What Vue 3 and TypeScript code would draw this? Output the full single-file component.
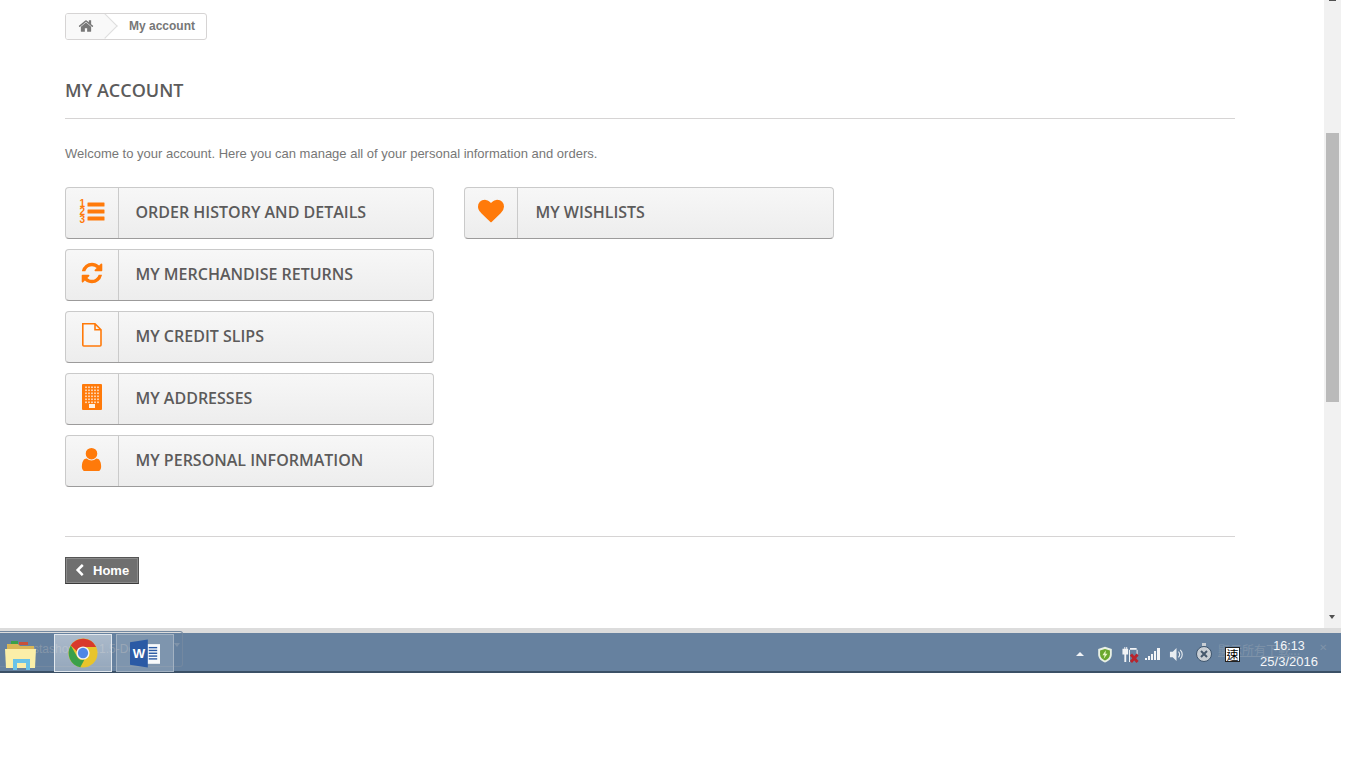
<script setup lang="ts">
interface Item { label: string; icon: string }
const left: Item[] = [
  { label: 'ORDER HISTORY AND DETAILS', icon: 'list' },
  { label: 'MY MERCHANDISE RETURNS', icon: 'refresh' },
  { label: 'MY CREDIT SLIPS', icon: 'file' },
  { label: 'MY ADDRESSES', icon: 'building' },
  { label: 'MY PERSONAL INFORMATION', icon: 'user' },
]
const right: Item[] = [{ label: 'MY WISHLISTS', icon: 'heart' }]
const columns = [left, right]
</script>

<template>
  <div class="screen">
    <div class="browser">
      <main class="page">
        <nav class="crumb">
          <span class="crumb-home">
            <i class="crumb-arrow"></i>
            <svg class="home-icon" viewBox="0 0 1792 1792"><path fill="#777" d="M1472 992v480q0 26-19 45t-45 19h-384v-384h-256v384h-384q-26 0-45-19t-19-45v-480q0-1 .5-3t.5-3l575-474 575 474q1 2 1 6zm223-69l-62 74q-8 9-21 11h-3q-13 0-21-7l-692-577-692 577q-12 8-24 7-13-2-21-11l-62-74q-8-10-7-23.500t11-21.500l719-599q32-26 76-26t76 26l244 204v-195q0-14 9-23t23-9h192q14 0 23 9t9 23v408l219 182q10 8 11 21.500t-7 23.500z"/></svg>
          </span>
          <span class="crumb-text">My account</span>
        </nav>
        <h1 class="title">MY ACCOUNT</h1>
        <p class="intro">Welcome to your account. Here you can manage all of your personal information and orders.</p>
        <div class="cols">
          <ul v-for="(col, c) in columns" :key="c" class="col">
            <li v-for="item in col" :key="item.label" class="link">
              <span class="link-icon">
                <svg v-if="item.icon === 'list'" class="ic" width="26" height="26" viewBox="0 0 26 26">
                  <text x="0.5" y="8.500" class="num">1</text>
                  <text x="0.5" y="16.500" class="num">2</text>
                  <text x="0.5" y="25" class="num">3</text>
                  <rect x="8.500" y="4.500" width="17" height="4" rx="0.5"/>
                  <rect x="8.500" y="11.500" width="17" height="4" rx="0.5"/>
                  <rect x="8.500" y="18.500" width="17" height="4" rx="0.5"/>
                </svg>
                <svg v-else-if="item.icon === 'refresh'" class="ic" width="24" height="24" viewBox="0 0 1792 1792"><path d="M1639 1056q0 5-1 7-64 268-268 434.500t-478 166.500q-146 0-282.500-55t-243.500-157l-129 129q-19 19-45 19t-45-19-19-45v-448q0-26 19-45t45-19h448q26 0 45 19t19 45-19 45l-137 137q71 66 161 102t187 36q134 0 250-65t186-179q11-17 53-117 8-23 30-23h192q13 0 22.500 9.500t9.500 22.500zm25-800v448q0 26-19 45t-45 19h-448q-26 0-45-19t-19-45 19-45l138-138q-148-137-349-137-134 0-250 65t-186 179q-11 17-53 117-8 23-30 23h-199q-13 0-22.500-9.500t-9.500-22.500v-7q65-268 270-434.500t480-166.500q146 0 284 55.500t245 156.500l130-129q19-19 45-19t45 19 19 45z"/></svg>
                <svg v-else-if="item.icon === 'file'" class="ic" width="22" height="26" viewBox="0 0 22 26"><path fill="#fff" fill-opacity="0.35" stroke="#ff7a0a" stroke-width="1.6" d="M1.8 1.8h12.2l6 6v15.2a1 1 0 0 1-1 1H2.8a1 1 0 0 1-1-1zM14 1.800v6h6"/></svg>
                <svg v-else-if="item.icon === 'building'" class="ic" width="20" height="26" viewBox="0 0 20 26">
                  <path d="M1 0h18a1 1 0 0 1 1 1v24a1 1 0 0 1-1 1H1a1 1 0 0 1-1-1V1a1 1 0 0 1 1-1z"/>
                  <g fill="#ffcfa6">
                    <template v-for="r in 6" :key="r">
                      <rect v-for="k in 5" :key="k" :x="3 + (k - 1) * 3" :y="-0.500 + r * 3" width="2" height="1.600"/>
                    </template>
                  </g>
                  <rect x="7" y="20" width="6" height="4" fill="#fff0e2"/>
                </svg>
                <svg v-else-if="item.icon === 'user'" class="ic" width="27" height="27" viewBox="0 0 1792 1792"><path d="M1536 1399q0 109-62.500 187t-150.500 78h-854q-88 0-150.500-78t-62.500-187q0-85 8.500-160.500t31.500-152 58.500-131 94-89 134.500-34.500q131 128 313 128t313-128q76 0 134.500 34.500t94 89 58.500 131 31.500 152 8.500 160.500zm-256-887q0 159-112.500 271.500t-271.500 112.500-271.500-112.500-112.500-271.500 112.500-271.500 271.500-112.500 271.500 112.500 112.500 271.500z"/></svg>
                <svg v-else class="ic" width="26" height="26" viewBox="0 0 1792 1792"><path d="M896 1664q-26 0-44-18l-624-602q-10-8-27.500-26t-55.500-65.500-68-97.500-53.500-121-23.500-138q0-220 127-344t351-124q62 0 126.500 21.500t120 58 95.500 68.500 76 68q36-36 76-68t95.500-68.500 120-58 126.500-21.500q224 0 351 124t127 344q0 221-229 450l-623 600q-18 18-44 18z"/></svg>
              </span>
              <span class="link-text">{{ item.label }}</span>
            </li>
          </ul>
        </div>
        <footer class="foot">
          <span class="home-btn">
            <svg width="13" height="13" viewBox="0 0 1792 1792"><path fill="#fff" d="M1427 301l-531 531 531 531q19 19 19 45t-19 45l-166 166q-19 19-45 19t-45-19l-742-742q-19-19-19-45t19-45l742-742q19-19 45-19t45 19l166 166q19 19 19 45t-19 45z"/></svg>
            Home
          </span>
        </footer>
      </main>
      <aside class="scrollbar">
        <i class="arrow-up"></i>
        <i class="thumb"></i>
        <i class="arrow-down"></i>
      </aside>
    </div>
    <div class="strip"></div>
    <div class="taskbar">
      <span class="ghost-left">stashop-1.6.1.5-De...</span>
      <i class="ghost-box"></i>
      <i class="ghost-caret"></i>
      <div class="apps">
        <span class="app app-plain">
          <svg width="34" height="30" viewBox="0 0 34 30">
            <path fill="#d9b656" d="M3 4h11l2 2h14v20H3z"/>
            <rect x="7" y="1" width="7" height="3" fill="#3aa04a"/>
            <rect x="15" y="2" width="9" height="3" fill="#c8503a"/>
            <path fill="#fbeea8" d="M1 9h31l-1 19H2z"/>
            <path fill="#69c3e8" d="M9 19h17v11h-4v-7H13v7H9z"/>
          </svg>
        </span>
        <span class="app app-active">
          <svg width="30" height="30" viewBox="0 0 32 32">
            <circle cx="16" cy="16" r="15.500" fill="#e8c42c"/>
            <path fill="#d8392c" d="M3 8A15.500 15.500 0 0 1 30 9.500H16a6.800 6.800 0 0 0-6.500 4.500z"/>
            <path fill="#3aa04a" d="M3 8l6.800 12a6.800 6.800 0 0 0 7.800 3l-4.500 8.300A15.500 15.500 0 0 1 3 8z"/>
            <circle cx="16" cy="16" r="7" fill="#f1f3f6"/>
            <circle cx="16" cy="16" r="5.500" fill="#4e86e6"/>
          </svg>
        </span>
        <span class="app app-open">
          <svg width="30" height="31" viewBox="0 0 32 32">
            <rect x="12" y="6" width="20" height="21" fill="#f7f9fb"/>
            <g fill="#2b5aa5">
              <rect x="20" y="9" width="9" height="1.500"/>
              <rect x="20" y="12" width="9" height="1.500"/>
              <rect x="20" y="15" width="9" height="1.500"/>
              <rect x="20" y="18" width="9" height="1.500"/>
              <rect x="20" y="21" width="9" height="1.500"/>
            </g>
            <path fill="#2b5aa5" d="M0 4l19-3v30L0 28z"/>
            <text x="3" y="21" class="word">W</text>
          </svg>
        </span>
      </div>
      <div class="tray">
        <i class="tray-up"></i>
        <svg class="t-shield" width="16" height="17" viewBox="0 0 18 20">
          <path fill="#e8efe4" d="M9 1l8 2.500V10c0 5-4 8-8 9.500C5 18 1 15 1 10V3.500z"/>
          <path fill="#6aa82e" d="M9 3.500l5.800 1.800V10c0 3.600-2.900 5.800-5.800 7-2.900-1.200-5.800-3.400-5.800-7V5.300z"/>
          <path fill="#e8f5c8" d="M10 5L6 11h2.500L7.500 15 12 9H9.500z"/>
        </svg>
        <svg class="t-power" width="18" height="17" viewBox="0 0 18 18">
          <path fill="#f2f4f6" d="M1 3h2V1h1v2h1V1h1v2h1v6H5v8H3V9H1zM9 2h7v2H9zM8 4h1v13H8zM16 4h1v5h-1z"/>
          <path stroke="#b9242c" stroke-width="3" d="M10 9l7 8M17 9l-7 8"/>
        </svg>
        <svg class="t-signal" width="16" height="12" viewBox="0 0 16 12">
          <g fill="#f2f4f6"><rect x="0" y="10" width="2" height="2"/><rect x="3" y="8" width="2" height="4"/><rect x="6" y="6" width="2" height="6"/><rect x="9" y="3" width="2" height="9"/><rect x="12" y="0" width="3" height="12"/></g>
        </svg>
        <svg class="t-sound" width="15" height="15" viewBox="0 0 16 16">
          <path fill="#e9edf1" d="M1 5h3l4-4v14l-4-4H1z"/>
          <path fill="none" stroke="#e9edf1" stroke-width="1.200" d="M10 5a4 4 0 0 1 0 6M12 3a7 7 0 0 1 0 10"/>
        </svg>
        <svg class="t-x" width="18" height="20" viewBox="0 0 18 20">
          <rect x="7" y="0" width="4" height="3" fill="#c8ced4"/>
          <circle cx="9" cy="11" r="7.500" fill="#c8ced4" stroke="#3f566e" stroke-width="1"/>
          <path stroke="#45586c" stroke-width="2" d="M6 8l6 6M12 8l-6 6"/>
        </svg>
        <span class="t-ghost">顯示所有下載...</span>
        <span class="t-ime">速</span>
        <span class="t-clock"><span class="t-time">16:13</span><span>25/3/2016</span></span>
        <span class="t-close">✕</span>
      </div>
    </div>
  </div>
</template>

<style scoped>
.screen {
  width: 1366px;
  height: 768px;
  overflow: hidden;
  background: #fff;
  font-family: "Liberation Sans", Arial, sans-serif;
}
.browser {
  display: flex;
  width: 1341px;
  height: 628px;
}
.page {
  width: 1324px;
  padding: 13px 89px 0 65px;
  box-sizing: border-box;
  background: #fff;
}
.crumb {
  display: flex;
  align-items: center;
  box-sizing: border-box;
  width: 142px;
  height: 27px;
  border: 1px solid #d6d4d4;
  border-radius: 3px;
  background: #fff;
  overflow: hidden;
}
.crumb-home {
  position: relative;
  display: flex;
  align-items: center;
  width: 40px;
  height: 25px;
  padding-left: 12px;
  box-sizing: border-box;
  flex: none;
  background: #f9f9f9;
}
.home-icon { position: relative; width: 16px; height: 16px; margin-top: -2px; }
.crumb-arrow {
  position: absolute;
  left: 30px;
  top: 3px;
  width: 18px;
  height: 18px;
  box-sizing: border-box;
  background: #f9f9f9;
  border-top: 1px solid #dedede;
  border-right: 1px solid #dedede;
  transform: rotate(45deg);
}
.crumb-text {
  margin-left: 23px;
  font-size: 12px;
  font-weight: 700;
  color: #777;
  line-height: 22px;
  margin-top: -2px;
  position: relative;
}
.title {
  margin: 38px 0 0;
  height: 41px;
  box-sizing: border-box;
  border-bottom: 1px solid #d6d4d4;
  font-family: "Open Sans", sans-serif;
  font-size: 18px;
  font-weight: 600;
  line-height: 24px;
  color: #5c5b5b;
}
.intro {
  margin: 26px 0 0;
  font-size: 13px;
  line-height: 18px;
  color: #777;
}
.cols {
  display: flex;
  gap: 30px;
  margin-top: 24px;
  height: 350px;
  border-bottom: 1px solid #d6d4d4;
  box-sizing: border-box;
}
.col {
  list-style: none;
  margin: 0;
  padding: 0;
  display: flex;
  flex-direction: column;
  gap: 10px;
  width: 369px;
}
.col + .col { width: 370px; }
.col + .col .link-text { padding-left: 17.500px; }
.link {
  display: flex;
  box-sizing: border-box;
  height: 52px;
  border: 1px solid #cacaca;
  border-bottom-color: #9c9b9b;
  border-radius: 4px;
  background: linear-gradient(#f7f7f7, #ededed);
  overflow: hidden;
}
.link-icon {
  display: flex;
  align-items: center;
  justify-content: center;
  box-sizing: border-box;
  width: 53px;
  flex: none;
  border-right: 1px solid #cacaca;
  padding: 0 1px 4px 0;
}
.ic { fill: #ff7a0a; }
.num {
  font-family: "Liberation Sans", Arial, sans-serif;
  font-size: 10px;
  font-weight: 700;
  fill: #ff7a0a;
}
.link-text {
  padding-left: 16.500px;
  font-family: "Open Sans", sans-serif;
  font-size: 16px;
  font-weight: 600;
  line-height: 48px;
  color: #5c5b5b;
  white-space: nowrap;
}
.foot { padding-top: 20px; }
.home-btn {
  display: inline-flex;
  align-items: center;
  gap: 7px;
  box-sizing: border-box;
  width: 74px;
  height: 27px;
  padding-left: 7px;
  border: 1px solid #555;
  border-bottom-color: #3b3b3b;
  box-shadow: inset 0 0 0 1px #8a8a8a;
  background: #6f6f6f;
  color: #fff;
  font-size: 13px;
  font-weight: 700;
}
.scrollbar {
  position: relative;
  width: 17px;
  height: 628px;
  background: #f1f1f1;
  padding: 133px 2px 0;
  box-sizing: border-box;
}
.thumb {
  display: block;
  width: 13px;
  height: 269px;
  background: #bababa;
}
.arrow-up {
  position: absolute;
  left: 5px;
  top: 0;
  width: 7px;
  height: 1px;
  background: #505050;
}
.arrow-down {
  position: absolute;
  left: 5px;
  top: 615px;
  width: 0;
  height: 0;
  border: 3.500px solid transparent;
  border-top: 4px solid #505050;
}
.strip {
  width: 1341px;
  height: 5px;
  background: #dcdcdc;
}
.taskbar {
  position: relative;
  display: flex;
  justify-content: space-between;
  box-sizing: border-box;
  width: 1341px;
  height: 40px;
  background: #66819f;
  border-bottom: 2px solid #3b5066;
}
.ghost-left {
  position: absolute;
  left: 33px;
  top: 9px;
  font-size: 12px;
  color: #8596a9;
  white-space: nowrap;
}
.ghost-box {
  position: absolute;
  left: 0;
  top: -2px;
  width: 183px;
  height: 36px;
  border: 1px solid #7388a0;
  border-left: 0;
  border-radius: 0 3px 3px 0;
  box-sizing: border-box;
}
.ghost-caret {
  position: absolute;
  left: 174px;
  top: 10px;
  width: 0;
  height: 0;
  border: 3px solid transparent;
  border-top: 4px solid #7f93a9;
}
.apps {
  position: relative;
  display: flex;
  gap: 4px;
  height: 38px;
  margin-top: 1px;
}
.app {
  display: flex;
  align-items: center;
  justify-content: center;
  box-sizing: border-box;
  width: 58px;
  height: 38px;
}
.app-plain {
  width: 50px;
  justify-content: flex-start;
  padding: 3px 0 0 4px;
}
.app-active {
  background: linear-gradient(rgba(255, 255, 255, 0.45), rgba(255, 255, 255, 0.3));
  border: 1px solid #e2e8ee;
}
.app-open {
  background: rgba(255, 255, 255, 0.16);
  border: 1px solid #a3b2c2;
}
.word {
  font-family: "Liberation Sans", Arial, sans-serif;
  font-size: 14px;
  font-weight: 700;
  fill: #fff;
}
.tray {
  position: relative;
  width: 270px;
  height: 38px;
}
.tray > * { position: absolute; }
.tray-up {
  left: 5px;
  top: 19px;
  width: 0;
  height: 0;
  border: 4px solid transparent;
  border-top: 0;
  border-bottom: 4px solid #f1f4f7;
}
.t-shield { left: 26px; top: 13px; }
.t-power { left: 50px; top: 13px; }
.t-signal { left: 74px; top: 15px; }
.t-sound { left: 98px; top: 14px; }
.t-x { left: 124px; top: 10px; }
.t-ghost {
  left: 147px;
  top: 9px;
  font-family: "Noto Sans CJK TC", sans-serif;
  font-size: 12px;
  line-height: 16px;
  color: #7f93a9;
  text-decoration: underline;
  white-space: nowrap;
}
.t-ime {
  left: 154px;
  top: 14px;
  width: 15px;
  height: 15px;
  box-sizing: border-box;
  border: 1px solid #222;
  background: #fff;
  color: #000;
  font-family: "Noto Sans CJK TC", sans-serif;
  font-size: 12px;
  line-height: 13px;
  text-align: center;
}
.t-clock {
  left: 188px;
  top: 5px;
  width: 60px;
  display: flex;
  flex-direction: column;
  align-items: center;
  color: #f4f6f8;
  font-size: 13px;
  line-height: 16px;
}
.t-time { font-size: 12.500px; }
.t-close {
  left: 248px;
  top: 8px;
  font-size: 10px;
  line-height: 14px;
  color: #7f93a9;
}
</style>
